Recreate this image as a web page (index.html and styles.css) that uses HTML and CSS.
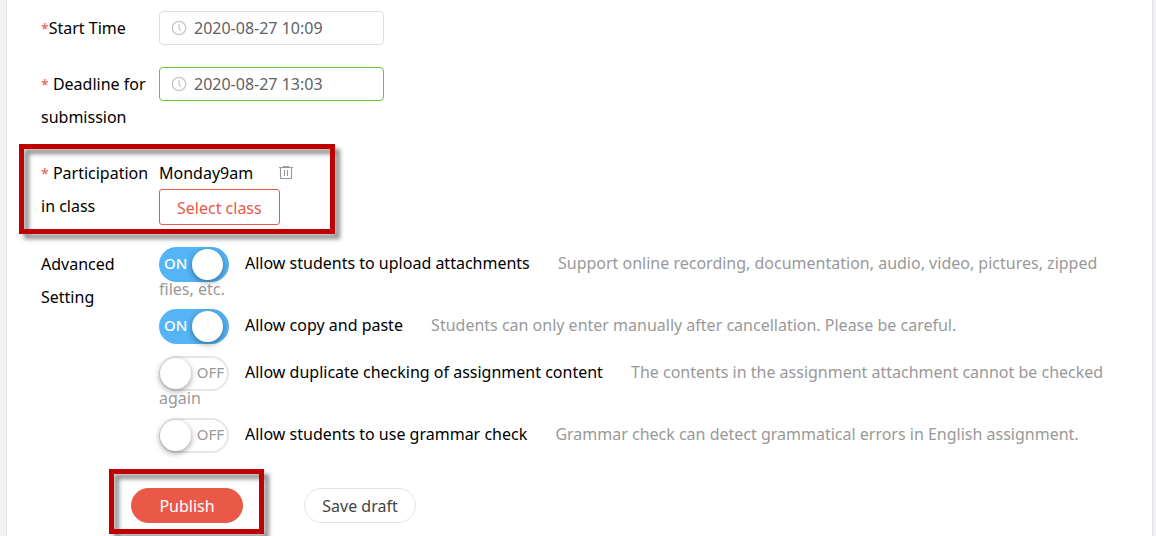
FILE: index.html
```html
<!DOCTYPE html>
<html lang="en">
<head>
<meta charset="utf-8">
<title>Assignment settings</title>
<link rel="stylesheet" href="styles.css">
</head>
<body>
<form class="panel">
  <div class="row">
    <label class="row-label" for="start"><span class="required">*</span>Start Time</label>
    <div class="row-body">
      <div class="date">
        <svg class="clock" viewBox="0 0 16 16" aria-hidden="true"><circle cx="8" cy="8" r="6.7"/><path d="M7.9 4v4.3l2.2 2.2"/></svg>
        <input id="start" class="date-input" type="text" value="2020-08-27 10:09">
      </div>
    </div>
  </div>
  <div class="row">
    <label class="row-label" for="deadline"><span class="required">*</span> Deadline for submission</label>
    <div class="row-body">
      <div class="date date-valid">
        <svg class="clock" viewBox="0 0 16 16" aria-hidden="true"><circle cx="8" cy="8" r="6.7"/><path d="M7.9 4v4.3l2.2 2.2"/></svg>
        <input id="deadline" class="date-input" type="text" value="2020-08-27 13:03">
      </div>
    </div>
  </div>
  <div class="row">
    <div class="row-label"><span class="required">*</span> Participation in class</div>
    <div class="row-body">
      <div class="class-item">
        <span>Monday9am</span>
        <button class="remove" type="button" aria-label="Remove class">
          <svg viewBox="0 0 16 16" aria-hidden="true"><path d="M1 2.5h14M5.5 2.5v-1h5v1M2.5 2.5v11h11v-11M6.5 5v6M9.5 5v6"/></svg>
        </button>
      </div>
      <button class="select-class" type="button">Select class</button>
    </div>
    <div class="marker marker-class"></div>
  </div>
  <div class="row">
    <div class="row-label">Advanced Setting</div>
    <div class="row-body options">
      <div class="option">
        <span class="switch"><input id="upload" type="checkbox" checked><span class="track"><span class="state">ON</span><span class="knob"></span></span></span><label for="upload">Allow students to upload attachments</label>
        <span class="hint">Support online recording, documentation, audio, video, pictures, zipped files, etc.</span>
      </div>
      <div class="option">
        <span class="switch"><input id="paste" type="checkbox" checked><span class="track"><span class="state">ON</span><span class="knob"></span></span></span><label for="paste">Allow copy and paste</label>
        <span class="hint">Students can only enter manually after cancellation. Please be careful.</span>
      </div>
      <div class="option">
        <span class="switch"><input id="duplicate" type="checkbox"><span class="track"><span class="knob"></span><span class="state">OFF</span></span></span><label for="duplicate">Allow duplicate checking of assignment content</label>
        <span class="hint">The contents in the assignment attachment cannot be checked again</span>
      </div>
      <div class="option">
        <span class="switch"><input id="grammar" type="checkbox"><span class="track"><span class="knob"></span><span class="state">OFF</span></span></span><label for="grammar">Allow students to use grammar check</label>
        <span class="hint">Grammar check can detect grammatical errors in English assignment.</span>
      </div>
    </div>
  </div>
  <div class="actions">
    <div class="publish-wrap">
      <button class="pill publish" type="submit">Publish</button>
      <div class="marker marker-publish"></div>
    </div>
    <button class="pill draft" type="button">Save draft</button>
  </div>
</form>
</body>
</html>
```
FILE: styles.css
```css
* { box-sizing: border-box; }

body {
  margin: 0;
  padding: 0 3px 0 6px;
  min-height: 100vh;
  display: flex;
  background: #f2f2f4;
  color: #000;
  font: 16px/16px "Segoe UI", "Noto Sans", "Open Sans", sans-serif;
}

button, input { font: inherit; margin: 0; }
button { cursor: pointer; }

.panel {
  flex: 1;
  min-width: 0;
  display: flex;
  flex-direction: column;
  gap: 22px;
  padding: 11px 20px 13px 34px;
  background: #fff;
  border: solid #e0e0e8;
  border-width: 0 1px;
}

.row { display: flex; position: relative; }
.row-label { flex: 0 0 118px; padding-top: 1px; line-height: 33px; }
.row-body { flex: 1; min-width: 0; }
.required { color: #ea5947; font-size: 14px; }

.date {
  display: flex;
  align-items: center;
  gap: 7px;
  width: 225px;
  height: 34px;
  padding: 0 11px;
  border: 1px solid #dcdfe6;
  border-radius: 4px;
}
.date-valid { border-color: #67c23a; }
.date-input {
  flex: 1;
  min-width: 0;
  padding: 0;
  border: 0;
  outline: 0;
  background: none;
  color: #606266;
}
.clock {
  width: 16px;
  height: 16px;
  fill: none;
  stroke: #c0c4cc;
  stroke-width: 1.2;
}

.class-item { display: flex; align-items: center; gap: 25px; height: 33px; }
.remove { padding: 0; border: 0; background: none; }
.remove svg {
  display: block;
  width: 16px;
  height: 16px;
  fill: none;
  stroke: #999;
  stroke-width: 1.1;
}
.select-class {
  display: block;
  height: 36px;
  padding: 1px 17px 0;
  border: 1px solid #ea5947;
  border-radius: 3px;
  background: #fff;
  color: #ea5947;
}

.options { display: flex; flex-direction: column; gap: 12px; line-height: 15px; }
.hint { margin-left: 24px; color: #999; }

.switch {
  display: inline-block;
  position: relative;
  width: 70px;
  height: 35px;
  margin-right: 16px;
  vertical-align: middle;
}
.switch input {
  position: absolute;
  inset: 0;
  width: 100%;
  height: 100%;
  opacity: 0;
  cursor: pointer;
}
.track {
  display: flex;
  align-items: center;
  justify-content: space-between;
  height: 100%;
  padding: 0 5px 0 1px;
  border-radius: 18px;
  box-shadow: inset 0 0 0 2px #e6e6e6;
  color: #999;
  font-size: 15px;
}
.switch input:checked + .track {
  padding: 0 6px 0 5px;
  background: #54b4f5;
  box-shadow: none;
  color: #fff;
}
.state { padding-bottom: 2px; }
.switch input:checked + .track .state { font-weight: 500; }
.knob {
  width: 31px;
  height: 31px;
  border-radius: 50%;
  background: #fff;
  box-shadow: 0 2px 6px rgba(0, 0, 0, .4);
}

.actions { display: flex; gap: 61px; margin-top: 13px; padding-left: 90px; }
.publish-wrap { position: relative; }
.pill {
  min-width: 112px;
  height: 35px;
  padding: 0 17px;
  border: 1px solid #e1e2ea;
  border-radius: 18px;
  background: #fff;
  color: #444;
}
.publish { border-color: #ea5947; background: #ea5947; color: #fff; }

.marker {
  position: absolute;
  border: 5px solid #c00000;
  filter: drop-shadow(5px 5px 2px rgba(0, 0, 0, .45));
  pointer-events: none;
}
.marker-class { left: -22px; top: -12px; width: 316px; height: 90px; }
.marker-publish { inset: -19px -21px -11px -22px; }
```
